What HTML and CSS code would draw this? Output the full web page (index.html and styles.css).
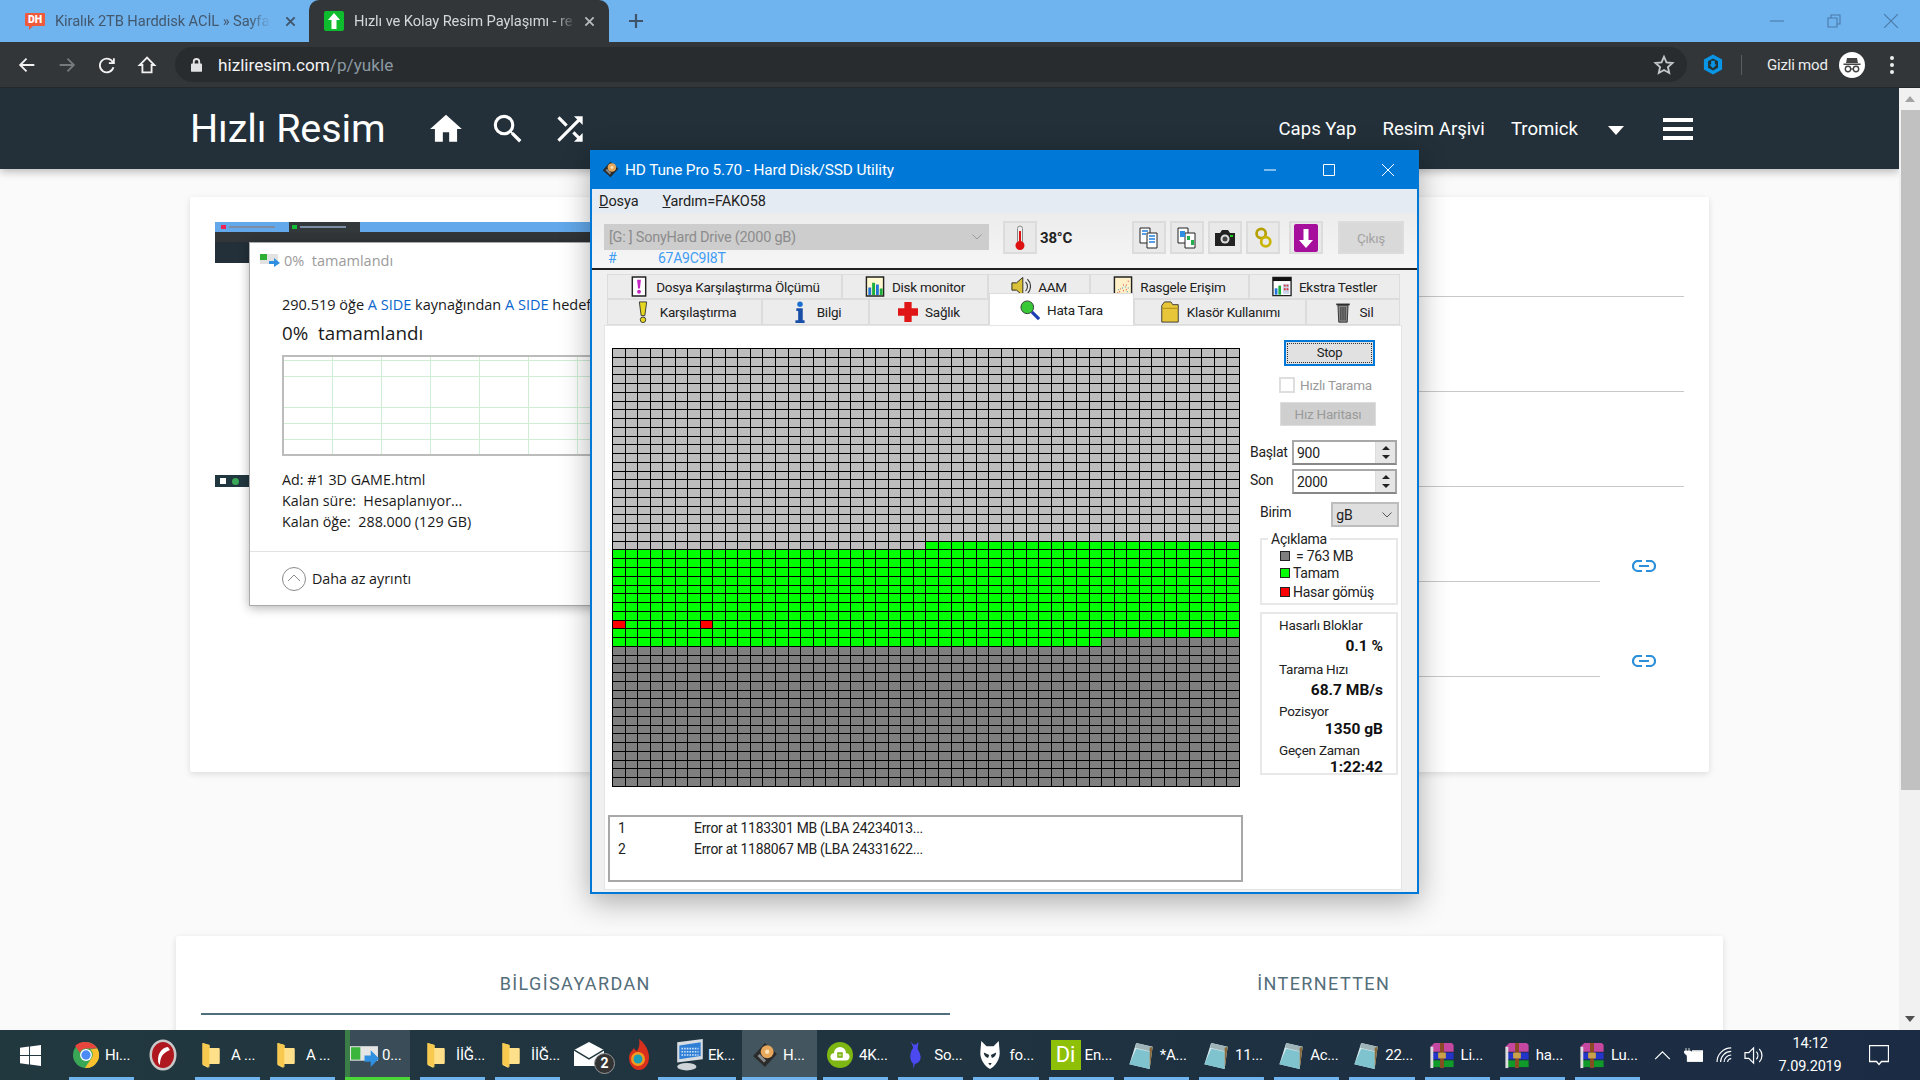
FILE: index.html
```html
<!DOCTYPE html>
<html lang="tr">
<head>
<meta charset="utf-8">
<title>Hızlı Resim</title>
<link rel="stylesheet" href="styles.css">
</head>
<body>
<svg class="defs" aria-hidden="true">
  <symbol id="i-folder" viewBox="0 0 18 26"><path d="M1 1l7 2v3h9a1 1 0 0 1 1 1v14a1 1 0 0 1-1 1H7v4l-6-3z" fill="#ffd96e"/><path d="M1 1l7 2v22l-7-3z" fill="#f7c94f"/><path d="M8 6h9a1 1 0 0 1 1 1v14a1 1 0 0 1-1 1H8z" fill="#ffe08a"/></symbol>
  <symbol id="i-note" viewBox="0 0 28 30"><path d="M9 2l17 4-3 23L2 24z" fill="#d9ecef"/><path d="M2 24L9 8l14 3v18z" fill="#7fc3cf"/><path d="M9 2l17 4-1 5L8 7z" fill="#9fb4b8"/><path d="M23 7l3-1-3 23z" fill="#8a6a3a"/></symbol>
  <symbol id="i-rar" viewBox="0 0 28 30"><path d="M2 6l4-4h18l2 2v7H4z" fill="#c6479f"/><path d="M3 12h23v7H3z" fill="#2234c9"/><path d="M3 20h23v7H3z" fill="#0f9a2a"/><path d="M2 6h3v22H2z" fill="#ddd"/><path d="M12 2h4v26h-4z" fill="#8a4a22"/><path d="M10 12h8v6h-8z" fill="#c9a14a"/></symbol>
  <symbol id="i-disk" viewBox="0 0 24 24"><path d="M12 1l11 10-11 12L1 13z" fill="#2b2b2b"/><circle cx="14" cy="9" r="6" fill="#e7a85c"/><circle cx="14" cy="9" r="2" fill="#fbe2b6"/><path d="M5 13l6 6 2-2-6-6z" fill="#8b8b8b"/></symbol>
</svg>

<div class="screen">
  <header class="tabstrip">
    <div class="tab">
      <span class="fav-dh">DH</span>
      <span class="tab-text">Kiralık 2TB Harddisk ACİL » Sayfa</span>
      <svg class="tab-x" viewBox="0 0 12 12"><path d="M1.500 1.500l9 9M10.500 1.500l-9 9"/></svg>
    </div>
    <div class="tab tab-active">
      <svg class="fav fav-up" viewBox="0 0 20 20"><rect width="20" height="20" rx="2" fill="#0ebd2e"/><path d="M10 2l6 7h-3.500v9h-5V9H4z" fill="#fff"/></svg>
      <span class="tab-text">Hızlı ve Kolay Resim Paylaşımı - re</span>
      <svg class="tab-x" viewBox="0 0 12 12"><path d="M1.500 1.500l9 9M10.500 1.500l-9 9"/></svg>
    </div>
    <svg class="newtab" viewBox="0 0 16 16"><path d="M8 1v14M1 8h14"/></svg>
    <div class="winctl">
      <svg viewBox="0 0 14 14"><path d="M0 7h14"/></svg>
      <svg viewBox="0 0 14 14"><path d="M1 4h9v9H1zM4 4V1h9v9h-3"/></svg>
      <svg viewBox="0 0 14 14"><path d="M0 0l14 14M14 0L0 14"/></svg>
    </div>
  </header>

  <div class="toolbar">
    <svg class="tool" viewBox="0 0 24 24"><path d="M20 12H5M11.500 5L4.500 12l7 7"/></svg>
    <svg class="tool tool-off" viewBox="0 0 24 24"><path d="M4 12h15M12.500 5l7 7-7 7"/></svg>
    <svg class="tool" viewBox="0 0 24 24"><path d="M18.800 10A7.500 7.500 0 1 0 19 14.500M19.500 4.500V10H14"/></svg>
    <svg class="tool" viewBox="0 0 24 24"><path d="M12 4L4 12h3v8h10v-8h3z"/></svg>
    <div class="omnibox">
      <svg class="lock" viewBox="0 0 12 16"><path d="M2 7V5a4 4 0 0 1 8 0v2h1a1 1 0 0 1 1 1v7a1 1 0 0 1-1 1H1a1 1 0 0 1-1-1V8a1 1 0 0 1 1-1zm2 0h4V5a2 2 0 0 0-4 0z"/></svg>
      <span class="url">hizliresim.com<span class="url-path">/p/yukle</span></span>
      <svg class="star" viewBox="0 0 24 24"><path d="M12 3l2.700 6.100 6.600.7-5 4.400 1.400 6.500L12 17.400l-5.700 3.300 1.400-6.500-5-4.400 6.600-.7z"/></svg>
    </div>
    <svg class="ext" viewBox="0 0 22 24"><path d="M11 1l10 5.500v11L11 23 1 17.500v-11z" fill="#0b95e6"/><path d="M11 5.500l5.500 3v7L11 18.500l-5.500-3v-7z" fill="#233"/><path d="M9 8h4v4h2l-4 4-4-4h2z" fill="#0b95e6"/></svg>
    <span class="tool-sep"></span>
    <span class="incog-label">Gizli mod</span>
    <svg class="incog" viewBox="0 0 26 26"><circle cx="13" cy="13" r="13" fill="#fff"/><path d="M8 6h10l1 5H7zM4.500 11.500h17v1.500h-17z" fill="#444"/><circle cx="9" cy="17" r="2.700" fill="none" stroke="#444" stroke-width="1.400"/><circle cx="17" cy="17" r="2.700" fill="none" stroke="#444" stroke-width="1.400"/><path d="M11.700 17h2.600" stroke="#444" stroke-width="1.200"/></svg>
    <span class="kebab"><i></i><i></i><i></i></span>
  </div>

  <div class="viewport">
    <div class="page">
      <nav class="sitenav">
        <span class="brand">Hızlı Resim</span>
        <svg class="navicon navicon-first" viewBox="0 0 24 24"><path d="M10 20v-6h4v6h5v-8h3L12 3 2 12h3v8z"/></svg>
        <svg class="navicon" viewBox="0 0 24 24"><path d="M15.500 14h-.79l-.28-.27A6.470 6.470 0 0 0 16 9.500 6.500 6.500 0 1 0 9.500 16c1.610 0 3.090-.59 4.230-1.570l.27.28v.79l5 4.990L20.490 19l-4.990-5zm-6 0C7.010 14 5 11.990 5 9.500S7.010 5 9.500 5 14 7.010 14 9.500 11.990 14 9.500 14z"/></svg>
        <svg class="navicon" viewBox="0 0 24 24"><path d="M10.590 9.170L5.410 4 4 5.410l5.170 5.170 1.420-1.410zM14.500 4l2.040 2.040L4 18.590 5.410 20 17.960 7.460 20 9.500V4h-5.500zm.33 9.410l-1.410 1.410 3.130 3.130L14.500 20H20v-5.500l-2.040 2.040-3.130-3.130z"/></svg>
        <div class="navlinks">
          <a>Caps Yap</a>
          <a>Resim Arşivi</a>
          <a>Tromick</a>
          <span class="caret"></span>
          <span class="burger"><i></i><i></i><i></i></span>
        </div>
      </nav>

      <section class="card card-upload">
        <div class="thumb">
          <div class="thumb-tabs"><span class="tt tt-a"><b class="tt-dot"></b><i></i></span><span class="tt tt-b"><b class="tt-dot tt-green"></b><i></i></span></div>
          <div class="thumb-tool"></div>
          <div class="thumb-nav"></div>
          <div class="thumb-body"></div>
          <div class="thumb-task"><b class="tt-win"></b><b class="tt-chrome"></b></div>
        </div>
        <div class="formcol">
          <div class="frow"></div>
          <div class="frow"></div>
          <div class="frow"></div>
          <div class="frow frow-link"><span class="fline"></span><svg class="linkicon" viewBox="0 0 24 12"><path d="M10 1H6a5 5 0 0 0 0 10h4M14 1h4a5 5 0 0 1 0 10h-4M7 6h10"/></svg></div>
          <div class="frow frow-link"><span class="fline"></span><svg class="linkicon" viewBox="0 0 24 12"><path d="M10 1H6a5 5 0 0 0 0 10h4M14 1h4a5 5 0 0 1 0 10h-4M7 6h10"/></svg></div>
        </div>
      </section>

      <section class="card card-tabs">
        <div class="ctab ctab-on">BİLGİSAYARDAN</div>
        <div class="ctab">İNTERNETTEN</div>
      </section>
    </div>
    <aside class="scrollbar">
      <span class="sb-arrow sb-up"></span>
      <span class="sb-thumb"></span>
      <span class="sb-arrow sb-down"></span>
    </aside>
  </div>

  <footer class="taskbar">
    <div class="tb-start"><svg viewBox="0 0 22 22"><path d="M0 3l9.500-1.300V10.500H0zM10.500 1.500L22 0v10.500H10.500zM0 11.500h9.500v8.800L0 19zM10.500 11.500H22V22l-11.500-1.600z" fill="#fff"/></svg></div>
    <div class="tb tb-run tb-first"><span class="tbi"><svg viewBox="0 0 24 24"><circle cx="12" cy="12" r="12" fill="#3aa757"/><path d="M12 0a12 12 0 0 1 10.400 6H12a6 6 0 0 0-5.700 4L2 3.500A12 12 0 0 1 12 0z" fill="#e8453c"/><path d="M22.400 6A12 12 0 0 1 11 24l5.500-8A6 6 0 0 0 16 7z" fill="#fbc02d"/><circle cx="12" cy="12" r="5.500" fill="#fff"/><circle cx="12" cy="12" r="4.300" fill="#4c8bf5"/></svg></span><span class="tbt">Hı...</span></div>
    <div class="tb-slot tb-slot-opera"><svg viewBox="0 0 28 32"><ellipse cx="14" cy="16" rx="13.500" ry="15.500" fill="#c9c9c9"/><ellipse cx="14" cy="16" rx="11" ry="13" fill="#b01820"/><path d="M19 8c-7 1-10 7-10 13 0 3 1 4 2 5 0-7 2-12 10-15z" fill="#fff"/></svg></div>
    <div class="tb tb-run"><span class="tbi"><svg class="ic-folder"><use href="#i-folder"/></svg></span><span class="tbt">A ...</span></div>
    <div class="tb tb-run"><span class="tbi"><svg class="ic-folder"><use href="#i-folder"/></svg></span><span class="tbt">A ...</span></div>
    <div class="tb tb-copy"><svg class="ic-copy" viewBox="0 0 28 26"><rect x="0" y="4" width="27" height="14" fill="#e5e5e5"/><rect x="1" y="5" width="9" height="12" fill="#3cb53c"/><path d="M14 13h6V8l8 8-8 8v-5h-6z" fill="#2f8fe0"/></svg><span class="tbt">0...</span></div>
    <div class="tb tb-run"><span class="tbi"><svg class="ic-folder"><use href="#i-folder"/></svg></span><span class="tbt">İİĞ...</span></div>
    <div class="tb tb-run"><span class="tbi"><svg class="ic-folder"><use href="#i-folder"/></svg></span><span class="tbt">İİĞ...</span></div>
    <div class="tb-slot tb-slot-mail"><svg viewBox="0 0 30 26"><path d="M0 8l15-8 15 8v16H0z" fill="#fff"/><path d="M0 8l15 9 15-9" fill="none" stroke="#22383f" stroke-width="1.500"/></svg><span class="mail-badge">2</span></div>
    <div class="tb-slot tb-slot-fire"><svg viewBox="0 0 22 32"><path d="M11 0c4 3 10 9 10 19a10 12 0 0 1-20 0C1 14 4 12 6 9c1 2 2 3 3 3 2-3 3-7 2-12z" fill="#d8301c"/><circle cx="10" cy="20" r="7" fill="#f39a1e"/><circle cx="10" cy="20" r="4.500" fill="#1c9fb5"/></svg></div>
    <div class="tb tb-run tb-ek"><span class="tbi tbi-w"><svg viewBox="0 0 30 30"><path d="M3 3l24-3v19l-24 3z" fill="#d8dde2"/><path d="M5 6l20-3v13L5 19z" fill="#2f7fd6"/><path d="M7 9h16M7 12h16M7 15h16" stroke="#cfe4fa" stroke-width="1.500" stroke-dasharray="1.500 1"/><ellipse cx="12" cy="26" rx="9" ry="3.500" fill="#cfd4d8"/></svg></span><span class="tbt">Ek...</span></div>
    <div class="tb tb-run tb-hd"><span class="tbi tbi-w"><svg viewBox="0 0 24 24"><use href="#i-disk"/></svg></span><span class="tbt">H...</span></div>
    <div class="tb tb-run tb-u"><span class="tbi"><svg viewBox="0 0 28 28"><circle cx="14" cy="14" r="14" fill="#7eb614"/><path d="M8 20a4 4 0 0 1-.5-8 6.500 6.500 0 0 1 13 0 4 4 0 0 1-.5 8z" fill="#fff"/><path d="M11 11h6v6h-6z" fill="#7eb614"/><path d="M12.500 13.500h3v1h-3z" fill="#fff"/></svg></span><span class="tbt">4K...</span></div>
    <div class="tb tb-run tb-u"><span class="tbi"><svg viewBox="0 0 16 32"><path d="M3 0l3 4h3l3-3-1 8c3 5 5 10 2 14-2 2-4 3-5 3l-2 6v-6C1 22 2 12 6 8z" fill="#4a4af0"/></svg></span><span class="tbt">So...</span></div>
    <div class="tb tb-run tb-u"><span class="tbi"><svg viewBox="0 0 24 32"><path d="M2 0l6 6h8l6-6 1 12c1 8-5 17-11 20C6 29 0 20 1 12z" fill="#fff"/><path d="M5 13l6 3-1 3c-3 0-5-3-5-6zM19 13l-6 3 1 3c3 0 5-3 5-6zM10 25h4l-2 3z" fill="#1f2f38"/></svg></span><span class="tbt">fo...</span></div>
    <div class="tb tb-run tb-u"><span class="tbi"><span class="di-box">Di</span></span><span class="tbt">En...</span></div>
    <div class="tb tb-run tb-u"><span class="tbi"><svg class="ic-24"><use href="#i-note"/></svg></span><span class="tbt">*A...</span></div>
    <div class="tb tb-run tb-u"><span class="tbi"><svg class="ic-24"><use href="#i-note"/></svg></span><span class="tbt">11...</span></div>
    <div class="tb tb-run tb-u"><span class="tbi"><svg class="ic-24"><use href="#i-note"/></svg></span><span class="tbt">Ac...</span></div>
    <div class="tb tb-run tb-u"><span class="tbi"><svg class="ic-24"><use href="#i-note"/></svg></span><span class="tbt">22...</span></div>
    <div class="tb tb-run tb-u"><span class="tbi"><svg class="ic-24"><use href="#i-rar"/></svg></span><span class="tbt">Li...</span></div>
    <div class="tb tb-run tb-u"><span class="tbi"><svg class="ic-24"><use href="#i-rar"/></svg></span><span class="tbt">ha...</span></div>
    <div class="tb tb-run tb-u"><span class="tbi"><svg class="ic-24"><use href="#i-rar"/></svg></span><span class="tbt">Lu...</span></div>
    <div class="tray">
      <svg class="tr tr-chev" viewBox="0 0 18 12"><path d="M1 10l8-8 8 8"/></svg>
      <svg class="tr tr-batt" viewBox="0 0 20 14"><path d="M3 0v3M6 0v3M1.500 3h6v2l-3 3-3-3z" fill="#fff" stroke="#fff" stroke-width=".8"/><path d="M4.500 8v5h15V3H9"/><rect x="5" y="4" width="14" height="9" fill="#fff"/></svg>
      <svg class="tr tr-wifi" viewBox="0 0 20 18"><path d="M1 17A16 16 0 0 1 17 1M5 17A12 12 0 0 1 17 5M9 17a8 8 0 0 1 8-8M13 17a4 4 0 0 1 4-4"/></svg>
      <svg class="tr tr-vol" viewBox="0 0 22 20"><path d="M1 7h4l5-5v16l-5-5H1zM13 6a6 6 0 0 1 0 8M16 3a10 10 0 0 1 0 14"/></svg>
      <div class="clock"><span>14:12</span><span>7.09.2019</span></div>
      <svg class="tr tr-note" viewBox="0 0 20 21"><path d="M.5.500h19v16h-7l-2.500 3-2.500-3h-7z"/></svg>
    </div>
  </footer>

  <!-- Explorer copy dialog window -->
  <div class="copydlg">
    <div class="cd-head">
      <svg class="cd-ic" viewBox="0 0 20 14"><rect y="1" width="18" height="10" fill="#e2e2e2"/><rect x="0" y="1" width="7" height="6" fill="#2fae35"/><path d="M9 8h5V5l6 5-6 4v-3H9z" fill="#2f8fe0"/></svg>
      <span>0%&nbsp; tamamlandı</span>
    </div>
    <p class="cd-line">290.519 öğe <span class="cd-blue">A SIDE</span> kaynağından <span class="cd-blue">A SIDE</span> hedef</p>
    <p class="cd-big">0%&nbsp; tamamlandı</p>
    <div class="cd-graph"></div>
    <div class="cd-info">
      <p>Ad: #1 3D GAME.html</p>
      <p>Kalan süre:&nbsp; Hesaplanıyor...</p>
      <p>Kalan öğe:&nbsp; 288.000 (129 GB)</p>
    </div>
    <div class="cd-foot">
      <svg class="cd-circle" viewBox="0 0 24 24"><circle cx="12" cy="12" r="11.500"/><path d="M6 14l6-6 6 6"/></svg>
      <span>Daha az ayrıntı</span>
    </div>
  </div>

  <!-- HD Tune window -->
  <div class="hd">
    <div class="hd-title">
      <svg class="hd-ticon"><use href="#i-disk"/></svg>
      <span class="hd-ttext">HD Tune Pro 5.70 - Hard Disk/SSD Utility</span>
      <div class="hd-ctl">
        <svg viewBox="0 0 12 12"><path d="M0 6h12"/></svg>
        <svg viewBox="0 0 12 12"><path d="M.5.500h11v11H.5z"/></svg>
        <svg viewBox="0 0 12 12"><path d="M0 0l12 12M12 0L0 12"/></svg>
      </div>
    </div>
    <div class="hd-menu"><span><u>D</u>osya</span><span><u>Y</u>ardım=FAKO58</span></div>
    <div class="hd-tools">
      <div class="hd-tl-left">
        <div class="hd-combo"><span>[G: ] SonyHard Drive (2000 gB)</span><svg viewBox="0 0 10 6"><path d="M.5.500L5 5l4.500-4.500"/></svg></div>
        <div class="hd-serial"><span>#</span><span>67A9C9I8T</span></div>
      </div>
      <div class="hd-btn hd-btn-temp"><svg viewBox="0 0 12 26"><rect x="3.500" y="1" width="5" height="18" rx="2.500" fill="#eee" stroke="#888"/><rect x="5" y="6" width="2" height="14" fill="#d11"/><circle cx="6" cy="20.500" r="4.500" fill="#d11"/></svg></div>
      <b class="hd-temp">38°C</b>
      <div class="hd-btn hd-btn-a"><svg viewBox="0 0 22 22"><path d="M2 1h10v15H2z" fill="#fff" stroke="#222"/><path d="M9 6h10v15H9z" fill="#fff" stroke="#222"/><path d="M4 4h6M4 7h4M11 9h6M11 12h6M11 15h6" stroke="#1f7fe0" stroke-width="1.500"/></svg></div>
      <div class="hd-btn"><svg viewBox="0 0 22 22"><path d="M2 1h10v15H2z" fill="#fff" stroke="#222"/><path d="M9 6h10v15H9z" fill="#fff" stroke="#222"/><path d="M4 4h5v6H4z" fill="#2f8fe0"/><path d="M11 9h3v4h-3zM15 13h3v5h-3z" fill="#22b14c"/></svg></div>
      <div class="hd-btn"><svg viewBox="0 0 22 20"><path d="M1 5h5l2-3h6l2 3h5v13H1z" fill="#222"/><circle cx="11" cy="11" r="4.500" fill="#ddd"/><circle cx="11" cy="11" r="2.500" fill="#444"/><rect x="16" y="7" width="3" height="2" fill="#2c2"/></svg></div>
      <div class="hd-btn"><svg viewBox="0 0 20 24"><circle cx="8" cy="7" r="5" fill="none" stroke="#b5a000" stroke-width="3"/><circle cx="13" cy="16" r="5" fill="none" stroke="#c9b400" stroke-width="3"/></svg></div>
      <div class="hd-btn hd-btn-save"><svg viewBox="0 0 24 28"><rect width="24" height="28" rx="2" fill="#a60f9c"/><path d="M12 24l-7-8h4.500V5h5v11H19z" fill="#fff"/></svg></div>
      <div class="hd-btn hd-btn-exit">Çıkış</div>
    </div>
    <div class="hd-body">
      <div class="hd-tabs hd-row1">
        <div class="hd-tab"><svg viewBox="0 0 16 22"><path d="M1 1h14v20H1z" fill="#fff" stroke="#222" stroke-width="1.500"/><path d="M6 4h4l-1 9H7z" fill="#c426c4"/><circle cx="8" cy="16.500" r="2" fill="#c426c4"/></svg>Dosya Karşılaştırma Ölçümü</div>
        <div class="hd-tab"><svg viewBox="0 0 20 22"><path d="M1 1h18v20H1z" fill="#fff8d0" stroke="#222" stroke-width="1.500"/><path d="M3 12h3v8H3zM11 9h3v11h-3z" fill="#2274d8"/><path d="M7 7h3v13H7zM15 13h3v7h-3z" fill="#1aae3c"/></svg>Disk monitor</div>
        <div class="hd-tab"><svg viewBox="0 0 22 22"><path d="M1 7h5l7-6v20l-7-6H1z" fill="#d9c23a" stroke="#222"/><path d="M16 6a7 7 0 0 1 0 10M18 3a11 11 0 0 1 0 16" fill="none" stroke="#333" stroke-width="1.200"/></svg>AAM</div>
        <div class="hd-tab"><svg viewBox="0 0 20 22"><path d="M1 1h18v20H1z" fill="#fff0c8" stroke="#222" stroke-width="1.500"/><path d="M4 17h1v1H4zM7 13h1v1H7zM10 15h1v1h-1zM13 9h1v1h-1zM15 5h1v1h-1zM10 9h1v1h-1zM6 16h1v1H6zM13 14h1v1h-1z" fill="#d33"/><path d="M5 14h1v1H5zM9 12h1v1H9zM12 11h1v1h-1zM15 12h1v1h-1zM14 16h1v1h-1z" fill="#29c"/></svg>Rasgele Erişim</div>
        <div class="hd-tab"><svg viewBox="0 0 22 22"><path d="M1 1h20v20H1z" fill="#fff" stroke="#222" stroke-width="1.500"/><path d="M1 1h20v4H1z" fill="#111"/><path d="M3 13h3v7H3z" fill="#2274d8"/><path d="M7 10h3v10H7z" fill="#1aae3c"/><path d="M12 8h7v11h-7z" fill="#c9d4ec"/><path d="M13 9h2v2h-2zM16 9h2v2h-2zM13 13h2v2h-2zM16 13h2v2h-2z" fill="#d33"/></svg>Ekstra Testler</div>
      </div>
      <div class="hd-tabs hd-row2">
        <div class="hd-tab"><svg viewBox="0 0 10 24"><path d="M1 1h8l-2 15H3z" fill="#e6d820" stroke="#333"/><circle cx="5" cy="20.500" r="3" fill="#e6d820" stroke="#333"/></svg>Karşılaştırma</div>
        <div class="hd-tab"><svg viewBox="0 0 12 24"><circle cx="6" cy="3.500" r="3" fill="#1a6fd0"/><path d="M2 8h7v13h2v3H1v-3h3V11H2z" fill="#1a4fa8"/></svg>Bilgi</div>
        <div class="hd-tab"><svg viewBox="0 0 22 22"><path d="M7 0h8v7h7v8h-7v7H7v-7H0V7h7z" fill="#e01616"/></svg>Sağlık</div>
        <div class="hd-tab hd-tab-on"><svg viewBox="0 0 22 22"><circle cx="8" cy="8" r="7" fill="#38c838" stroke="#333"/><path d="M13 13l8 8" stroke="#1a3fb0" stroke-width="3.500"/></svg>Hata Tara</div>
        <div class="hd-tab"><svg viewBox="0 0 20 24"><path d="M1 5l3-4h7l2 3h6v19H1z" fill="#e8c63a" stroke="#333"/><path d="M2 8h16" stroke="#a98a10"/></svg>Klasör Kullanımı</div>
        <div class="hd-tab"><svg viewBox="0 0 18 26"><path d="M1 3h16v2H1z" fill="#333"/><path d="M3 5h12l-1 20H4z" fill="#8a8a8a" stroke="#222"/><path d="M6.500 7v16M9 7v16M11.500 7v16" stroke="#222"/></svg>Sil</div>
      </div>
      <div class="hd-panel">
        <div class="hd-left">
          <div class="scan"><div class="scan-grid" id="scan"></div></div>
          <div class="errlist">
            <div class="err"><span>1</span><span>Error at 1183301 MB (LBA 24234013...</span></div>
            <div class="err"><span>2</span><span>Error at 1188067 MB (LBA 24331622...</span></div>
          </div>
        </div>
        <div class="hd-right">
          <div class="btn-stop"><span>Stop</span></div>
          <label class="chk"><span class="chk-box"></span>Hızlı Tarama</label>
          <div class="btn-off">Hız Haritası</div>
          <div class="fld fld-start"><span>Başlat</span><div class="spin"><span class="spin-v">900</span><span class="spin-b"><i class="up"></i><i class="dn"></i></span></div></div>
          <div class="fld fld-end"><span>Son</span><div class="spin"><span class="spin-v">2000</span><span class="spin-b"><i class="up"></i><i class="dn"></i></span></div></div>
          <div class="unit"><span>Birim</span><div class="unit-sel">gB<svg viewBox="0 0 10 6"><path d="M.5.500L5 5l4.500-4.500"/></svg></div></div>
          <fieldset class="legendbox">
            <legend>Açıklama</legend>
            <div class="lg lg-first"><i class="sw sw-gray"></i>= 763 MB</div>
            <div class="lg"><i class="sw sw-green"></i>Tamam</div>
            <div class="lg"><i class="sw sw-red"></i>Hasar gömüş</div>
          </fieldset>
          <div class="stats">
            <div class="st-l">Hasarlı Bloklar</div><div class="st-v st-gap1">0.1 %</div>
            <div class="st-l">Tarama Hızı</div><div class="st-v st-gap2">68.7 MB/s</div>
            <div class="st-l">Pozisyor</div><div class="st-v st-gap3">1350 gB</div>
            <div class="st-l">Geçen Zaman</div><div class="st-v st-gap4">1:22:42</div>
          </div>
        </div>
      </div>
    </div>
  </div>
</div>
<script src="script.js"></script>
</body>
</html>
```
FILE: styles.css
```css
* { box-sizing: border-box; }
html, body { margin: 0; padding: 0; height: 100%; overflow: hidden; }
body { font-family: Roboto, "Noto Sans", sans-serif; background: #fafafa; }
.defs { position: absolute; width: 0; height: 0; }
.screen { position: relative; width: 1920px; height: 1080px; display: flex; flex-direction: column; overflow: hidden; }

/* browser tab strip */
.tabstrip { height: 42px; flex: none; background: #6fb3ef; display: flex; align-items: center; }
.tab { width: 309px; height: 42px; padding-left: 25px; display: flex; align-items: center; color: #44586c; font-size: 14.700px; }
.fav-dh { width: 20px; height: 13px; flex: none; background: #ef5a3c; color: #fff; font-size: 10.500px; line-height: 13px; font-weight: 900; text-align: center; border-radius: 1px; position: relative; letter-spacing: 0; margin-top: -3px; }
.fav-dh::after { content: ""; position: absolute; left: 4px; top: 13px; border-top: 4px solid #ef5a3c; border-right: 4px solid transparent; }
.fav { width: 20px; height: 16px; flex: none; }
.fav-up { height: 20px; }
.tab-text { margin-left: 10px; width: 216px; flex: none; white-space: nowrap; overflow: hidden; -webkit-mask-image: linear-gradient(90deg, #000 90%, transparent); mask-image: linear-gradient(90deg, #000 90%, transparent); letter-spacing: -.1px; }
.tab-x { width: 11px; height: 11px; margin-left: 14px; fill: none; stroke: #3f5468; stroke-width: 2; flex: none; }
.tab-active { width: 300px; padding-left: 15px; background: #323639; border-radius: 10px 10px 0 0; color: #d5d7d9; }
.tab-active .tab-text { width: 222px; }
.tab-active .tab-x { stroke: #b8babc; margin-left: 8px; }
.newtab { width: 16px; height: 16px; margin-left: 19px; fill: none; stroke: #3f5468; stroke-width: 2.200; flex: none; }
.winctl { margin-left: auto; display: flex; gap: 43px; padding-right: 22px; align-items: center; }
.winctl svg { width: 14px; height: 14px; fill: none; stroke: #4a7aa8; stroke-width: 1.100; }

/* browser toolbar */
.toolbar { height: 46px; flex: none; background: #323639; display: flex; align-items: center; padding-left: 16px; border-bottom: 1px solid #24282b; }
.tool { width: 22px; height: 22px; fill: none; stroke: #f2f2f2; stroke-width: 2; margin-right: 18px; flex: none; }
.tool-off { stroke: #77797b; }
.omnibox { height: 35px; width: 1512px; margin-left: -1px; background: #292c2f; border-radius: 18px; display: flex; align-items: center; padding-left: 16px; flex: none; }
.lock { width: 11px; height: 15px; fill: #e2e3e4; flex: none; }
.url { margin-left: 16px; font-size: 17.200px; color: #f3f4f4; white-space: nowrap; }
.url-path { color: #8b99a3; }
.star { width: 22px; height: 22px; margin-left: auto; margin-right: 12px; fill: none; stroke: #c5c7c8; stroke-width: 2; }
.ext { width: 20px; height: 23px; margin-left: 16px; flex: none; }
.tool-sep { width: 1px; height: 20px; background: #5a5e61; margin-left: 18px; flex: none; }
.incog-label { margin-left: 25px; font-size: 15px; color: #eceded; white-space: nowrap; letter-spacing: -.2px; }
.incog { width: 26px; height: 26px; margin-left: 11px; flex: none; }
.kebab { margin-left: 25px; display: flex; flex-direction: column; gap: 3px; }
.kebab i { width: 4px; height: 4px; border-radius: 50%; background: #eee; display: block; }

/* page */
.viewport { flex: 1; min-height: 0; display: flex; overflow: hidden; }
.page { width: 1899px; flex: none; overflow: hidden; background: #fafafa; }
.sitenav { height: 81px; background: #233039; display: flex; align-items: center; padding: 0 206px 0 190px; box-shadow: 0 3px 8px rgba(0,0,0,.25); position: relative; }
.brand { font-size: 39.500px; color: #fff; white-space: nowrap; letter-spacing: -.1px; }
.navicon { width: 38px; height: 38px; fill: #fff; margin-left: 24px; flex: none; }
.navicon-first { margin-left: 41.500px; }
.navlinks { margin-left: auto; display: flex; align-items: center; gap: 26px; color: #fff; font-size: 18.600px; }
.caret { width: 0; height: 0; border-left: 8px solid transparent; border-right: 8px solid transparent; border-top: 9px solid #fff; margin-left: 4px; margin-top: 4px; }
.burger { display: flex; flex-direction: column; gap: 5px; width: 30px; margin-left: 13px; }
.burger i { display: block; height: 4px; background: #fff; }

.card { background: #fff; box-shadow: 0 2px 6px rgba(0,0,0,.12); border-radius: 2px; }
.card-upload { margin: 28px 0 0 190px; width: 1519px; height: 575px; display: flex; align-items: flex-start; justify-content: space-between; padding: 25px 25px 0; }
.thumb { width: 640px; height: 265px; display: flex; flex-direction: column; background: #fff; }
.thumb-tabs { height: 10px; background: #62a8ea; display: flex; align-items: stretch; padding-left: 3px; }
.tt { width: 71px; display: flex; align-items: center; gap: 3px; padding-left: 3px; }
.tt i { display: block; height: 2px; width: 46px; background: #7c8ea6; }
.tt-b { background: #33383b; }
.tt-dot { width: 5px; height: 4px; background: #e25; display: block; }
.tt-green { background: #1b3; }
.thumb-tool { height: 10px; background: #323639; }
.thumb-nav { height: 21px; background: #233039; }
.thumb-body { flex: 1; }
.thumb-task { height: 12px; background: #21373f; display: flex; align-items: center; gap: 6px; padding-left: 5px; }
.tt-win { width: 6px; height: 6px; background: #fff; display: block; }
.tt-chrome { width: 7px; height: 7px; border-radius: 50%; background: #3aa757; display: block; }
.formcol { width: 800px; margin-top: -20px; display: flex; flex-direction: column; }
.frow { height: 95px; border-bottom: 1px solid #c8c8c8; flex: none; }
.frow-link { border-bottom: 0; display: flex; align-items: flex-end; }
.fline { width: 716px; height: 1px; background: #c8c8c8; flex: none; }
.linkicon { width: 24px; height: 12px; margin-left: 32px; margin-bottom: 10px; fill: none; stroke: #2c8fd8; stroke-width: 2.200; flex: none; }
.card-tabs { margin: 164px 0 0 176px; width: 1547px; height: 200px; display: flex; padding: 0 25px; }
.ctab { width: 50%; height: 79px; padding-top: 38px; text-align: center; color: #546e7a; font-size: 18px; line-height: 20px; letter-spacing: 1.400px; }
.ctab-on { border-bottom: 2px solid #4f6f7d; }
.scrollbar { width: 21px; flex: none; background: #f1f1f1; display: flex; flex-direction: column; align-items: center; position: relative; }
.sb-arrow { width: 0; height: 0; border-left: 5px solid transparent; border-right: 5px solid transparent; flex: none; }
.sb-up { border-bottom: 6px solid #a3a3a3; margin-top: 8px; }
.sb-thumb { width: 19px; height: 680px; margin-top: 8px; margin-left: 2px; background: #c1c1c1; flex: none; }
.sb-down { border-top: 6px solid #505050; margin-top: auto; margin-bottom: 8px; }

/* taskbar */
.taskbar { height: 50px; flex: none; background: linear-gradient(90deg, #22383f, #1f3340 50%, #1b2b44); display: flex; color: #fff; }
.tb-start { width: 69px; flex: none; display: flex; align-items: center; padding-left: 20px; }
.tb-start svg { width: 21px; height: 21px; }
.tb { width: 65px; flex: none; height: 50px; display: flex; align-items: center; margin-right: 10px; position: relative; }
.tb-first { margin-right: 0; }
.tb-run::after, .tb-copy::after { content: ""; position: absolute; left: 0; right: 0; bottom: 0; height: 3px; background: #6fb3ef; }
.tbi { width: 36px; flex: none; display: flex; justify-content: center; align-items: center; padding-right: 2px; }
.tbi svg { width: 26px; height: 28px; }
.tbi .ic-folder { width: 19px; height: 26px; margin-right: 3px; }
.tbi .ic-24 { width: 28px; height: 29px; }
.tbt { font-size: 15px; white-space: nowrap; letter-spacing: -.2px; }
.tb-copy { background: #3a4c58; border-left: 5px solid #3b7d46; }
.tb-copy::after { background: #4ad637; left: -5px; }
.ic-copy { width: 29px; height: 27px; margin-right: 3px; flex: none; }
.tb-slot { flex: none; height: 50px; display: flex; align-items: center; position: relative; }
.tb-slot-opera { width: 61px; padding-left: 15px; }
.tb-slot-opera svg { width: 28px; height: 32px; }
.tb-slot-mail { width: 60px; margin-left: -10px; padding-left: 14px; }
.tb-slot-mail svg { width: 30px; height: 26px; }
.mail-badge { position: absolute; left: 34px; top: 23px; width: 21px; height: 21px; border-radius: 50%; background: #333; border: 1px solid #999; color: #fff; font-size: 14px; line-height: 19px; text-align: center; font-weight: 700; }
.tb-slot-fire { width: 38px; padding-left: 8px; }
.tb-slot-fire svg { width: 22px; height: 32px; }
.tb-ek { width: 78px; margin-right: 6px; }
.tbi-w { padding-right: 0; }
.tb-ek .tbi { width: 50px; padding-left: 14px; }
.tb-ek .tbi svg { width: 32px; height: 32px; }
.tb-hd { width: 75px; margin-right: 6px; background: #43555e; }
.tb-hd .tbi { width: 41px; padding-left: 4px; }
.tb-u { width: 65.200px; }
.di-box { width: 30px; height: 30px; background: #8fc008; color: #fff; font-size: 22px; line-height: 30px; text-align: center; display: block; flex: none; }
.tray { flex: 1; display: flex; align-items: center; min-width: 0; }
.tr { fill: none; stroke: #fff; stroke-width: 1.300; flex: none; }
.tr-chev { width: 17px; height: 11px; margin-left: 4px; }
.tr-batt { width: 20px; height: 14px; margin-left: 12px; }
.tr-wifi { width: 18px; height: 16px; margin-left: 13px; }
.tr-vol { width: 21px; height: 19px; margin-left: 10px; }
.clock { display: flex; flex-direction: column; align-items: center; gap: 5px; width: 90px; margin-left: 0; font-size: 14.500px; line-height: 18px; letter-spacing: -.2px; }
.tr-note { width: 20px; height: 21px; margin-left: 14px; }

/* explorer copy dialog */
.copydlg { position: absolute; left: 249px; top: 242px; width: 400px; height: 364px; background: #fff; border: 1px solid #aaa; box-shadow: 0 2px 10px rgba(0,0,0,.3); font-family: "Open Sans", "Noto Sans", sans-serif; font-size: 14.300px; color: #1a1a1a; padding-top: 7px; overflow: hidden; }
.copydlg p { margin: 0; white-space: nowrap; }
.cd-head { display: flex; align-items: center; padding-left: 10px; height: 20px; color: #9b9b9b; font-size: 14.500px; white-space: nowrap; }
.cd-ic { width: 20px; height: 14px; margin-right: 4px; flex: none; }
.copydlg .cd-line { padding-left: 32px; margin-top: 25px; line-height: 20px; font-size: 14.500px; }
.cd-blue { color: #0a66cc; }
.copydlg .cd-big { padding-left: 32px; margin-top: 4px; font-size: 18.800px; line-height: 28px; }
.cd-graph { margin: 8px 0 0 32px; width: 400px; height: 101px; border: 2px solid #bcbcbc; background-color: #fff; background-image: repeating-linear-gradient(90deg, transparent 0 48px, #cfeed5 48px 49px), repeating-linear-gradient(180deg, transparent 0 15px, #cfeed5 15px 15.800px); background-position: 0 0, 0 -12px; }
.cd-info { padding-left: 32px; margin-top: 13px; line-height: 21px; }
.cd-foot { border-top: 1px solid #e2e2e2; margin-top: 19px; height: 54px; display: flex; align-items: center; padding-left: 32px; white-space: nowrap; }
.cd-circle { width: 24px; height: 24px; margin-right: 6px; fill: none; stroke: #8a8a8a; stroke-width: 1; flex: none; }

/* HD Tune */
.hd { position: absolute; left: 590px; top: 150px; width: 829px; height: 744px; display: flex; flex-direction: column; background: #f0f0f0; border: 2px solid #0078d7; border-top: 0; box-shadow: 0 8px 28px rgba(0,0,0,.32); font-size: 13.500px; color: #222; letter-spacing: -.25px; }
.hd-title { height: 39px; flex: none; margin: 0 -2px; background: #0078d7; color: #fff; display: flex; align-items: center; padding-left: 12px; }
.hd-ticon { width: 17px; height: 17px; flex: none; }
.hd-ttext { margin-left: 6px; font-size: 15.400px; white-space: nowrap; letter-spacing: -.15px; }
.hd-ctl { margin-left: auto; display: flex; gap: 47px; padding-right: 25px; align-items: center; }
.hd-ctl svg { width: 12px; height: 12px; fill: none; stroke: #fff; stroke-width: 1; }
.hd-menu { height: 24px; flex: none; background: #e5ebf2; display: flex; align-items: center; gap: 24px; padding-left: 7px; font-size: 14.500px; letter-spacing: -.1px; }
.hd-tools { height: 57px; flex: none; background: linear-gradient(#ececec, #f6f6f6); border-bottom: 2px solid #222; display: flex; align-items: flex-start; padding: 8px 0 0 12px; }
.hd-tl-left { width: 385px; flex: none; }
.hd-combo { height: 26px; margin-top: 3px; background: #cdcdcd; display: flex; align-items: center; justify-content: space-between; padding: 0 7px 0 5px; color: #8c8c8c; font-size: 14.500px; }
.hd-combo svg { width: 10px; height: 6px; fill: none; stroke: #9a9a9a; }
.hd-serial { display: flex; color: #3f9df5; font-size: 14px; line-height: 17px; padding-left: 4px; }
.hd-serial span:first-child { width: 50px; }
.hd-btn { width: 34px; height: 33px; flex: none; background: #e9e9e9; border: 2px solid #dcdcdc; display: flex; align-items: center; justify-content: center; margin-right: 4px; }
.hd-btn svg { width: 22px; height: 22px; }
.hd-btn-temp { margin-left: 14px; margin-right: 3px; }
.hd-btn-temp svg { width: 12px; height: 26px; }
.hd-temp { font-size: 15px; width: 92px; flex: none; letter-spacing: -.2px; margin-top: 8px; }
.hd-btn-save { margin-left: 5px; margin-right: 15px; }
.hd-btn-save svg { width: 24px; height: 28px; }
.hd-btn-exit { width: 66px; background: #d9d9d9; color: #a3a3a3; font-size: 13.500px; margin-right: 0; }
.hd-body { flex: 1; min-height: 0; display: flex; flex-direction: column; padding: 4px 15px 2px 12px; }
.hd-tabs { display: grid; flex: none; padding-left: 3px; padding-right: 2px; }
.hd-row1 { height: 25px; grid-template-columns: 235px 146px 102px 159px 151px; }
.hd-row1 .hd-tab { padding-top: 1px; }
.hd-row1 .hd-tab svg { height: 21px; margin-top: -2px; }
.hd-row2 { height: 26px; grid-template-columns: 155px 107px 120px 145px 172px 94px; }
.hd-tab { background: #ececec; border: 1px solid #dcdcdc; display: flex; align-items: center; justify-content: center; gap: 7px; white-space: nowrap; }
.hd-tab svg { width: 20px; height: 22px; flex: none; }
.hd-tab-on { background: #fff; border-bottom: 0; height: 32px; margin-top: -6px; position: relative; z-index: 1; padding-top: 1px; }
.hd-panel { flex: 1; min-height: 0; background: #fff; border: 1px solid #e4e4e4; display: flex; }
.hd-left { width: 641px; flex: none; padding: 22px 0 0 3px; }
.scan { width: 628px; margin-left: 4px; height: 439px; }
.scan-grid { display: grid; grid-template-columns: repeat(50, 1fr); grid-template-rows: repeat(50, 1fr); gap: 1px; padding: 1px; background: #000; width: 100%; height: 100%; }
.cell { min-width: 0; min-height: 0; }
.c-l { background: #bdbdbd; }
.c-g { background: #00ff00; }
.c-d { background: #7f7f7f; }
.c-r { background: #ff0000; }
.errlist { margin-top: 28px; width: 635px; height: 67px; border: 2px solid #a8a8a8; background: #fff; }
.err { display: flex; height: 21px; align-items: center; font-size: 13.900px; white-space: nowrap; }
.err span:first-child { width: 84px; padding-left: 8px; }
.hd-right { flex: 1; min-width: 0; padding: 14px 0 0 4px; position: relative; }
.btn-stop { width: 91px; height: 26px; margin-left: 34px; border: 2px solid #0078d7; background: #e1e1e1; display: flex; padding: 1px; }
.btn-stop span { flex: 1; border: 1px dotted #333; text-align: center; line-height: 18px; font-size: 13px; }
.chk { display: flex; align-items: center; margin: 11px 0 0 29px; height: 15px; color: #9a9a9a; font-size: 13.500px; white-space: nowrap; }
.chk-box { width: 16px; height: 16px; border: 2px solid #dedede; background: #fff; margin-right: 5px; flex: none; }
.btn-off { width: 96px; height: 24px; margin: 10px 0 0 30px; background: #cfcfcf; border: 1px solid #ddd; color: #9a9a9a; text-align: center; line-height: 22px; }
.fld { display: flex; align-items: center; width: 147px; justify-content: space-between; white-space: nowrap; font-size: 14px; }
.fld-start { margin-top: 14px; }
.fld-start > span { margin-bottom: 2px; }
.fld-end { margin-top: 4px; }
.fld-end > span { margin-bottom: 4px; }
.spin { width: 105px; height: 25px; border: 2px solid #a8a8a8; border-bottom-color: #888; display: flex; align-items: center; background: #fff; padding-left: 3px; font-size: 14px; }
.spin-v { flex: 1; }
.spin-b { width: 20px; height: 21px; background: #e6e6e6; border-left: 1px solid #ddd; display: flex; flex-direction: column; align-items: center; justify-content: space-around; padding: 2px 0; }
.spin-b i { width: 0; height: 0; border-left: 4px solid transparent; border-right: 4px solid transparent; }
.spin-b .up { border-bottom: 4px solid #222; }
.spin-b .dn { border-top: 4px solid #222; }
.unit { display: flex; align-items: center; margin-top: 8px; padding-left: 10px; font-size: 14px; }
.unit > span { margin-bottom: 6px; }
.unit-sel { width: 68px; height: 25px; margin-left: 40px; background: #dfdfdf; border: 2px solid #bdbdbd; display: flex; align-items: center; justify-content: space-between; padding: 0 5px 0 3px; font-size: 14px; }
.unit-sel svg { width: 10px; height: 6px; fill: none; stroke: #555; }
.legendbox { width: 138px; height: 73px; margin: 5px 0 0 10px; padding: 0 0 0 18px; border: 2px solid #e8e8e8; min-width: 0; }
.legendbox legend { margin-left: -12px; padding: 0 3px; line-height: 14px; margin-bottom: 2px; font-size: 14px; }
.lg { display: flex; align-items: center; height: 18.500px; white-space: nowrap; font-size: 14px; }
.lg-first { gap: 6px; height: 16px; }
.sw { width: 10px; height: 10px; border: 1px solid #222; margin-right: 3px; flex: none; }
.lg-first .sw { margin-right: 0; }
.sw-gray { background: #7f7f7f; }
.sw-green { background: #00ff00; }
.sw-red { background: #ff0000; }
.stats { width: 138px; height: 163px; margin: 7px 0 0 10px; border: 2px solid #e8e8e8; padding: 2px 13px 0 17px; }
.st-l { line-height: 18px; font-size: 13.500px; white-space: nowrap; }
.st-v { font-weight: 700; font-size: 15.500px; line-height: 18px; text-align: right; letter-spacing: 0; color: #111; }
.st-gap1 { margin-top: 3px; margin-bottom: 5px; }
.st-gap2 { margin-top: 3px; margin-bottom: 3px; }
.st-gap3 { margin-bottom: 3px; }
.st-gap4 { margin-top: -1px; }
```
FILE: script.js
```js
(function () {
  var grid = document.getElementById('scan');
  var frag = document.createDocumentFragment();
  for (var r = 0; r < 50; r++) {
    for (var c = 0; c < 50; c++) {
      var t = 'c-l';
      if (r === 22 && c >= 25) t = 'c-g';
      else if (r > 22 && r < 33) t = 'c-g';
      else if (r === 33) t = c < 39 ? 'c-g' : 'c-d';
      else if (r > 33) t = 'c-d';
      if (r === 31 && (c === 0 || c === 7)) t = 'c-r';
      var d = document.createElement('div');
      d.className = 'cell ' + t;
      frag.appendChild(d);
    }
  }
  grid.appendChild(frag);
})();
```
